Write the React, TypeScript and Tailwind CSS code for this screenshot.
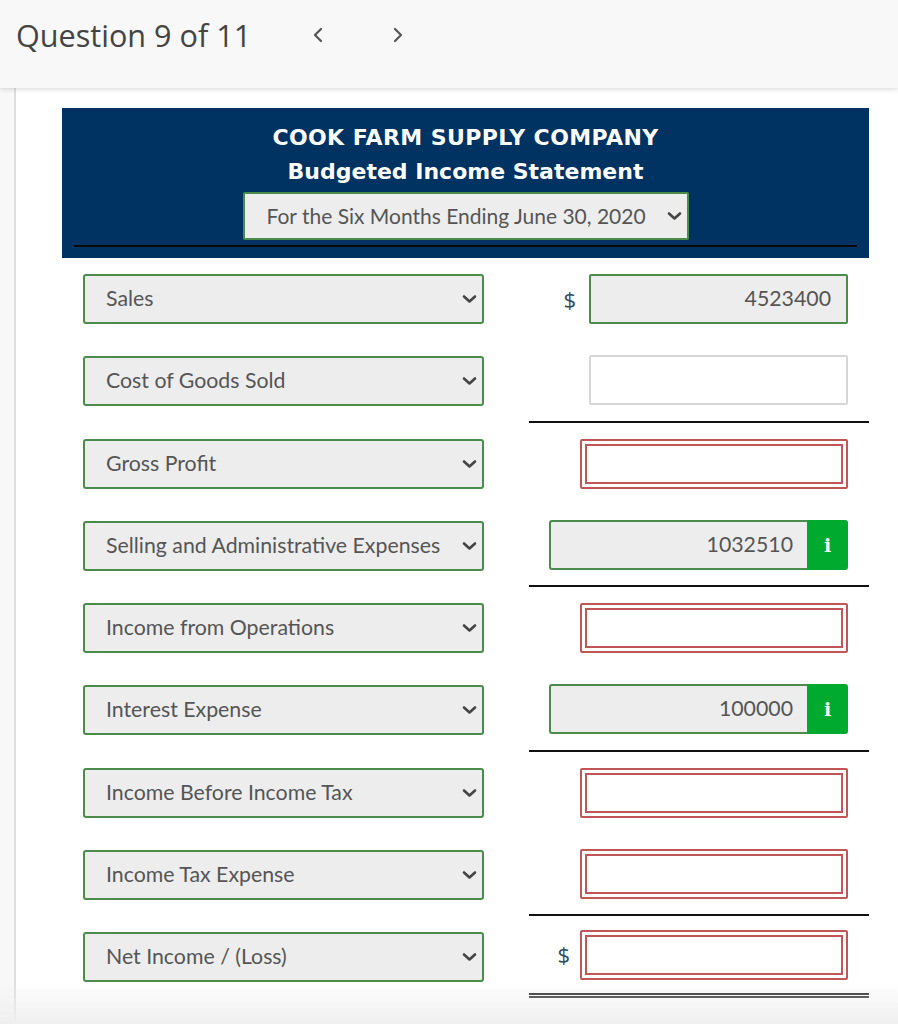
import React from 'react'

type Cell = 'dollarValue' | 'empty' | 'red' | 'info' | 'dollarRed'

interface Row {
  label: string
  cell: Cell
  value?: string
  rule?: 'single' | 'double'
}

const rows: Row[] = [
  { label: 'Sales', cell: 'dollarValue', value: '4523400' },
  { label: 'Cost of Goods Sold', cell: 'empty', rule: 'single' },
  { label: 'Gross Profit', cell: 'red' },
  { label: 'Selling and Administrative Expenses', cell: 'info', value: '1032510', rule: 'single' },
  { label: 'Income from Operations', cell: 'red' },
  { label: 'Interest Expense', cell: 'info', value: '100000', rule: 'single' },
  { label: 'Income Before Income Tax', cell: 'red' },
  { label: 'Income Tax Expense', cell: 'red', rule: 'single' },
  { label: 'Net Income / (Loss)', cell: 'dollarRed', rule: 'double' },
]

function Chevron({ className = '' }: { className?: string }) {
  return (
    <svg viewBox="0 0 15 10" className={className} fill="none">
      <polyline points="2,2.5 7.5,7.5 13,2.5" stroke="#444" strokeWidth="2.6" strokeLinecap="round" strokeLinejoin="round" />
    </svg>
  )
}

function SelectBox({ label }: { label: string }) {
  return (
    <div className="flex h-[50px] w-[401px] items-center justify-between rounded-[3px] border-2 border-[#4b8b4b] bg-[#ededed] pl-[21px] pr-[5px]">
      <span className="text-[21.3px] text-[#555]">{label}</span>
      <Chevron className="h-[10px] w-[15px]" />
    </div>
  )
}

function Dollar() {
  return <span className="text-[22px] text-[#34495e] font-['Open_Sans']">$</span>
}

function RedBox() {
  return (
    <div className="h-[50px] w-[268px] rounded-[2px] border-2 border-[#c05656] bg-white p-[3px]">
      <div className="h-full w-full border-2 border-[#c05656]" />
    </div>
  )
}

function RightCell({ row }: { row: Row }) {
  const rule =
    row.rule === 'single'
      ? 'border-b-2 border-[#111]'
      : row.rule === 'double'
        ? 'border-b-[5px] border-double border-[#111]'
        : ''
  return (
    <div className={`flex h-[82.25px] w-[340px] items-center justify-end pr-[21px] ${rule}`}>
      {row.cell === 'dollarValue' && (
        <div className="flex items-center gap-[13px]">
          <Dollar />
          <div className="flex h-[50px] w-[259px] items-center justify-end rounded-[2px] border-2 border-[#4b8b4b] bg-[#ededed] pr-[15px] text-[21.3px] text-[#555]">
            {row.value}
          </div>
        </div>
      )}
      {row.cell === 'empty' && (
        <div className="h-[50px] w-[259px] rounded-[2px] border-2 border-[#d6d6d6] bg-white" />
      )}
      {row.cell === 'red' && <RedBox />}
      {row.cell === 'dollarRed' && (
        <div className="flex items-center gap-[10px]">
          <Dollar />
          <RedBox />
        </div>
      )}
      {row.cell === 'info' && (
        <div className="flex h-[50px] w-[299px]">
          <div className="flex flex-1 items-center justify-end rounded-l-[3px] border-2 border-r-0 border-[#4b8b4b] bg-[#ededed] pr-[14px] text-[21.3px] text-[#555]">
            {row.value}
          </div>
          <div className="flex w-[41px] items-center justify-center rounded-r-[3px] bg-[#00aa2e] text-[19px] font-bold text-white font-['DejaVu_Serif']">
            i
          </div>
        </div>
      )}
    </div>
  )
}

export default function App() {
  return (
    <div className="relative min-h-screen bg-white font-['Lato',sans-serif]">
      <header className="relative z-10 flex h-[88px] items-start bg-[#f8f8f8] pl-[16px] pt-[14px] shadow-[0_2px_4px_rgba(0,0,0,0.12)]">
        <h1 className="text-[30.6px] leading-[42px] font-['Open_Sans'] text-[#444]">Question 9 of 11</h1>
        <div className="ml-[61px] flex h-[42px] items-center gap-[68px]">
          <svg viewBox="0 0 12 16" className="h-[16px] w-[12px]" fill="none">
            <polyline points="9,2 3,8 9,14" stroke="#555" strokeWidth="2.2" strokeLinecap="round" strokeLinejoin="round" />
          </svg>
          <svg viewBox="0 0 12 16" className="h-[16px] w-[12px]" fill="none">
            <polyline points="3,2 9,8 3,14" stroke="#555" strokeWidth="2.2" strokeLinecap="round" strokeLinejoin="round" />
          </svg>
        </div>
      </header>

      <div className="flex">
        <div className="w-[16px] shrink-0 border-r-2 border-[#dedede] bg-[#f8f8f8]" />
        <main className="flex-1 pl-[46px] pt-[20px] pb-[40px]">
          <div className="w-[807px]">
            <div className="bg-[#003262] pt-[14px] pb-[11px]">
              <div className="text-center font-['DejaVu_Sans'] font-bold text-white">
                <div className="text-[22px] leading-[32px] tracking-[0.4px]">COOK FARM SUPPLY COMPANY</div>
                <div className="text-[22px] leading-[36px]">Budgeted Income Statement</div>
              </div>
              <div className="mt-[2px] flex justify-center">
                <div className="flex h-[48px] w-[446px] items-center justify-between rounded-[2px] border-2 border-[#4b8b4b] bg-[#ededed] pl-[22px] pr-[5px]">
                  <span className="text-[21px] text-[#555]">For the Six Months Ending June 30, 2020</span>
                  <Chevron className="h-[10px] w-[15px]" />
                </div>
              </div>
              <div className="mx-[12px] mt-[5px] border-t-2 border-[#0a0a0a]" />
            </div>

            {rows.map((row) => (
              <div key={row.label} className="flex items-center">
                <div className="pl-[21px] pr-[45px]">
                  <SelectBox label={row.label} />
                </div>
                <RightCell row={row} />
              </div>
            ))}
          </div>
        </main>
      </div>

      <div className="pointer-events-none fixed inset-x-0 bottom-0 h-[42px] bg-gradient-to-b from-white/0 to-[#efefef]" />
    </div>
  )
}
